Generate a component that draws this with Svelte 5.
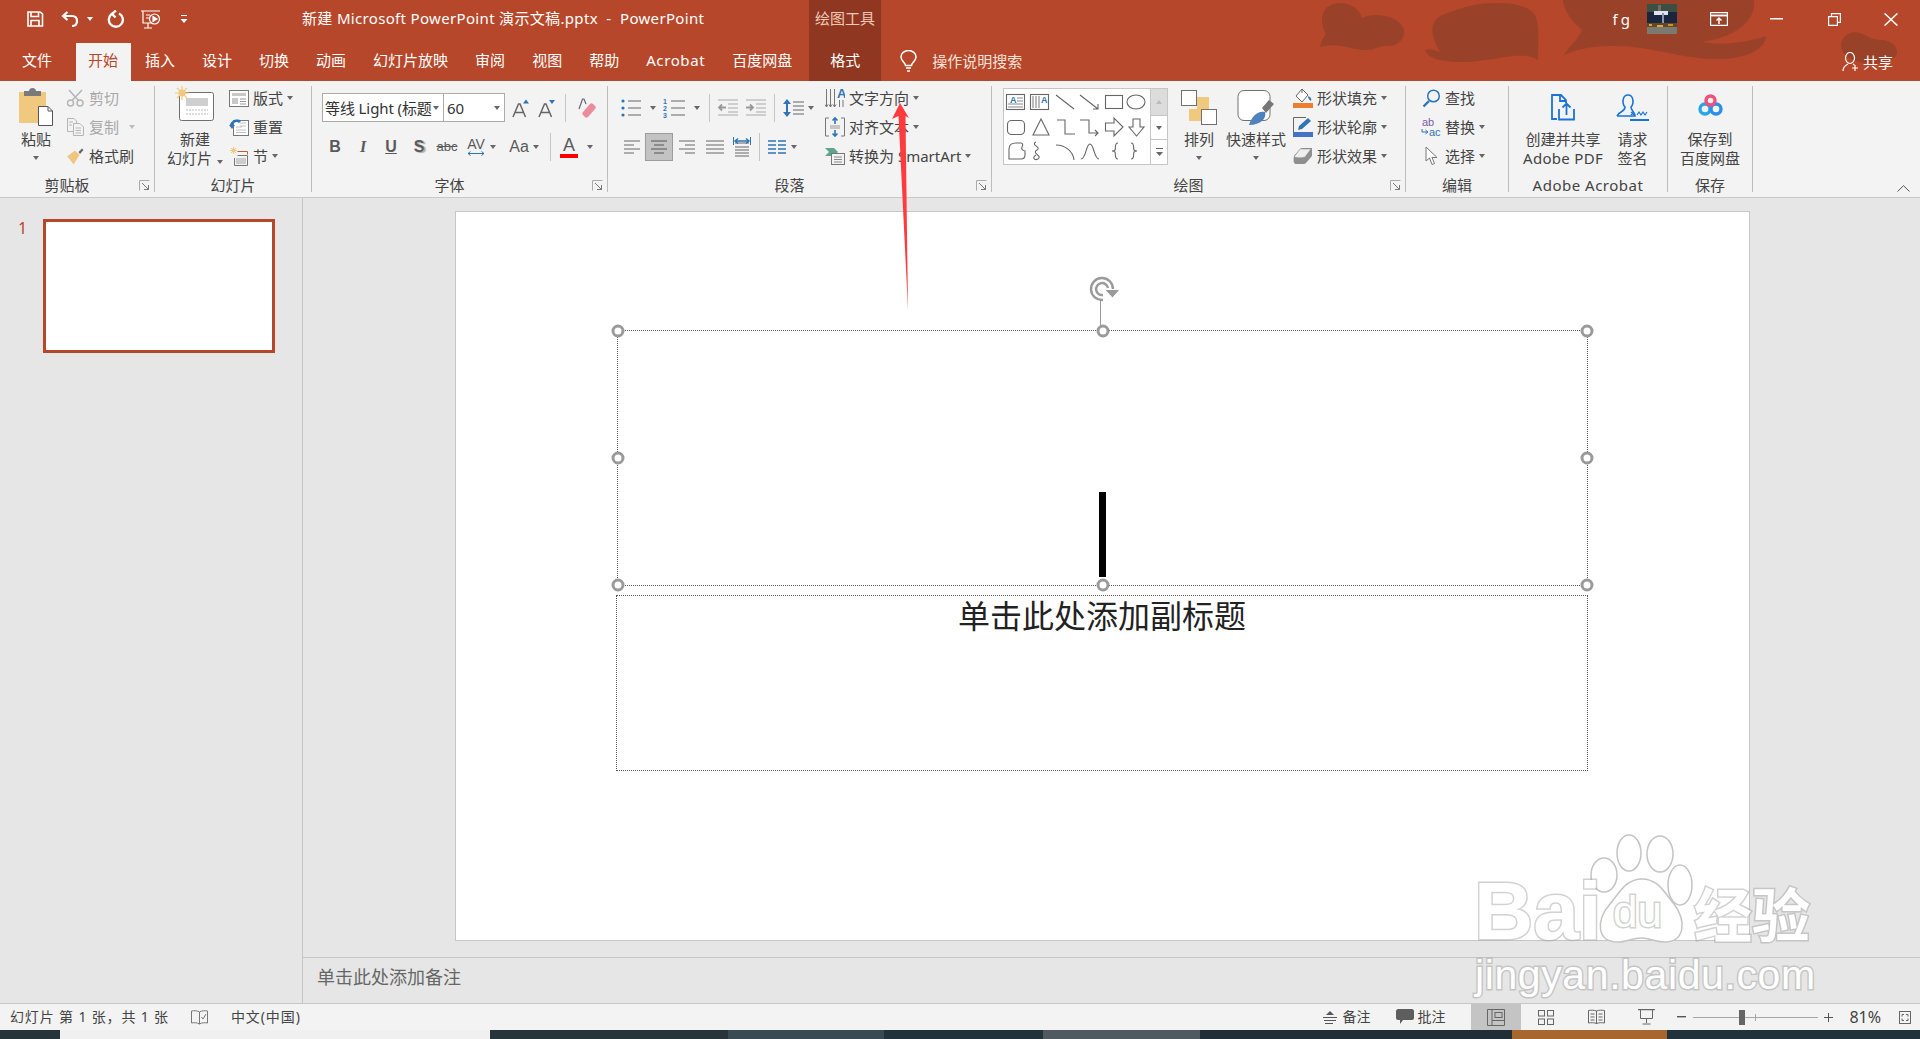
<script>
  const tabs = ['插入', '设计', '切换', '动画', '幻灯片放映', '审阅', '视图', '帮助', 'Acrobat', '百度网盘'];
</script>

<style>
  :global(body) {
    margin: 0;
    background: #e6e6e6;
  }

  .app {
    position: relative;
    width: 1920px;
    height: 1039px;
    overflow: hidden;
    display: flex;
    flex-direction: column;
    font-family: "Noto Sans", "Noto Sans CJK SC", sans-serif;
    font-size: 15px;
    line-height: 20px;
    color: #444;
    background: #e6e6e6;
  }

  svg {
    display: block;
    flex: none;
  }

  /* header */
  .header {
    position: relative;
    height: 81px;
    flex: none;
    background: #b7472a;
    color: #fff;
  }

  .header-art {
    position: absolute;
    left: 0;
    top: 0;
  }

  .titlebar,
  .tabs {
    position: relative;
    display: flex;
  }

  .titlebar {
    height: 43px;
  }

  .titlebar > * {
    height: 38px;
    display: flex;
    align-items: center;
  }

  .qat {
    width: 302px;
    flex: none;
    padding-left: 26px;
    box-sizing: border-box;
  }

  .qat-undo { margin-left: 17px; }
  .qat-caret { margin-left: 8px; }
  .qat-redo { margin-left: 13px; }
  .qat-show { margin-left: 16px; }
  .qat-more { margin-left: 19px; }

  .caret.light {
    border-top-color: #fff;
  }

  .doc-title {
    width: 507px;
    flex: none;
    padding-bottom: 2px;
    box-sizing: border-box;
    white-space: nowrap;
    letter-spacing: 0.33px;
  }

  .titlebar > .ctx-title {
    width: 72px;
    height: 43px;
    flex: none;
    padding-bottom: 7px;
    box-sizing: border-box;
    justify-content: center;
    background: #8f3720;
    color: #f2c9b9;
  }

  .win {
    margin-left: auto;
    padding-right: 22px;
  }

  .user {
    letter-spacing: 3px;
    margin-right: 14px;
  }

  .avatar { margin-right: 33px; }
  .win-min { margin-left: 42px; }
  .win-restore { margin-left: 45px; }
  .win-close { margin-left: 43px; }

  .tabs {
    height: 38px;
    align-items: stretch;
    padding-left: 8.5px;
  }

  .tab {
    display: flex;
    align-items: center;
    padding: 0 13.5px 5px;
    white-space: nowrap;
  }

  .tab.file {
    margin-right: 10px;
  }

  .tab.latin {
    letter-spacing: 0.6px;
  }

  .tab.active {
    padding: 0 12.5px 5px;
    margin-right: 1px;
    background: #f3f3f3;
    color: #b7472a;
  }

  .tab.format {
    margin-left: 3.5px;
    width: 72px;
    padding: 0 0 5px;
    justify-content: center;
    background: #8f3720;
  }

  .tell {
    display: flex;
    align-items: center;
    margin-left: 19px;
    padding-bottom: 2px;
  }

  .tell span {
    margin-left: 15px;
    padding-bottom: 1px;
    color: #f6e3dc;
  }

  .share {
    display: flex;
    align-items: center;
    margin-left: auto;
    padding-right: 27px;
  }

  .share span {
    margin-left: 4px;
  }

  /* ribbon */
  .ribbon {
    display: flex;
    align-items: flex-start;
    height: 117px;
    flex: none;
    padding-top: 5px;
    box-sizing: border-box;
    background: #f3f3f3;
    border-bottom: 1px solid #c9c9c9;
  }

  .group {
    display: flex;
    flex-direction: column;
    height: 106px;
    flex: none;
    box-sizing: border-box;
    border-right: 1px solid #bdbdbd;
  }

  .g-clip { width: 155px; }
  .g-slides { width: 157px; }
  .g-font { width: 296px; }
  .g-para { width: 384px; }
  .g-draw { width: 414px; }
  .g-edit { width: 103px; }
  .g-acro { width: 159px; }
  .g-save { width: 85px; }

  .body {
    display: flex;
    height: 90px;
    flex: none;
  }

  .label {
    display: flex;
    height: 18px;
    flex: none;
    line-height: 18px;
    align-items: center;
  }

  .label span {
    flex: 1;
    text-align: center;
  }

  .label .spaced {
    letter-spacing: 0.5px;
  }

  .launcher {
    width: 20px;
    display: flex;
    justify-content: center;
  }

  .big {
    display: flex;
    flex-direction: column;
    align-items: center;
    flex: none;
    line-height: 19px;
    white-space: nowrap;
  }

  .big-icon {
    height: 44px;
    flex: none;
    display: flex;
    align-items: flex-start;
    justify-content: center;
  }

  .big .caret {
    margin-top: 7px;
  }

  .big-line {
    display: flex;
    align-items: center;
    gap: 5px;
  }

  .big-line.spaced {
    letter-spacing: 0.3px;
  }

  .small {
    display: flex;
    flex-direction: column;
    gap: 5px;
    flex: none;
  }

  .sbtn {
    display: flex;
    align-items: center;
    height: 24px;
    white-space: nowrap;
  }

  .sbtn .ico {
    width: 20px;
    margin-right: 4px;
    display: flex;
    justify-content: center;
    flex: none;
  }

  .sbtn .caret {
    margin-left: 4px;
  }

  .sbtn .cr-copy {
    margin-left: 10px;
  }

  .disabled {
    color: #a8a8a8;
  }

  .caret {
    display: block;
    width: 0;
    height: 0;
    flex: none;
    border-left: 3.5px solid transparent;
    border-right: 3.5px solid transparent;
    border-top: 4px solid #666;
  }

  .caret.off {
    border-top-color: #bdbdbd;
  }

  .paste-col { width: 48px; margin-left: 12px; }
  .clip-small { margin-left: 6px; }
  .clip-small .ico { width: 18px; margin-right: 5px; }

  .slide-col { width: 60px; margin-left: 10px; }
  .slide-small { margin-left: 4px; }

  /* font + paragraph controls */
  .stack {
    display: flex;
    flex-direction: column;
    padding-top: 7px;
    gap: 10px;
  }

  .row {
    display: flex;
    align-items: center;
    height: 29px;
    flex: none;
  }

  .g-font .stack { margin-left: 10px; }

  .combo {
    display: flex;
    align-items: center;
    justify-content: space-between;
    height: 29px;
    box-sizing: border-box;
    background: #fff;
    border: 1px solid #ababab;
    padding: 0 4px 0 2px;
    color: #333;
    white-space: nowrap;
  }

  .combo-font { width: 122px; }
  .combo-size { width: 62px; margin-left: -1px; padding-left: 3px; }

  .combo-name {
    letter-spacing: -0.1px;
  }

  .vsep {
    width: 1px;
    height: 28px;
    flex: none;
    background: #c6c6c6;
  }

  .grow { margin-left: 7px; }
  .shrink { margin-left: 8px; }
  .sep-a { margin-left: 9px; }
  .clear { margin-left: 12px; }

  .glyph {
    display: flex;
    align-items: center;
    justify-content: center;
    width: 18px;
    height: 24px;
    flex: none;
    font-family: "Liberation Sans", sans-serif;
    font-size: 16px;
    color: #5a5a5a;
  }

  .glyph.bold { font-weight: 700; margin-left: 4px; }
  .glyph.ital { font-style: italic; font-family: "Liberation Serif", serif; font-weight: 700; margin-left: 10px; }
  .glyph.und { text-decoration: underline; font-weight: 700; margin-left: 10px; }
  .glyph.shad { font-weight: 700; margin-left: 10px; text-shadow: 2px 1px 1px #aaa; }
  .glyph.strike { width: 20px; font-size: 13px; text-decoration: line-through; margin-left: 9px; }
  .glyph.case { margin-left: 14px; font-size: 16px; }

  .spacing { margin-left: 10px; flex-direction: column; line-height: 12px; font-size: 14px; }
  .spacing svg { margin-top: 1px; }
  .cr { margin-left: 5px; }
  .sep-b { margin-left: 11px; }

  .color {
    flex-direction: column;
    margin-left: 9px;
    font-size: 18px;
    line-height: 18px;
  }

  .color i {
    display: block;
    width: 18px;
    height: 4px;
    background: #f00;
  }

  .cr-color { margin-left: 9px; }

  .para-left {
    margin-left: 13px;
    width: 204px;
    flex: none;
  }

  .b-num { margin-left: 7px; }
  .para-left .cr { margin-left: 8px; }
  .p-sep1 { margin-left: 9px; }
  .p-out { margin-left: 8px; }
  .p-in { margin-left: 8px; }
  .p-sep2 { margin-left: 8px; }
  .p-space { margin-left: 8px; }
  .para-left .p-space-cr { margin-left: 3px; }

  .al-left { margin-left: 3px; }

  .al-center {
    display: flex;
    align-items: center;
    justify-content: center;
    width: 28px;
    height: 28px;
    box-sizing: border-box;
    margin-left: 5px;
    background: #c3c3c3;
    border: 1px solid #9c9c9c;
    flex: none;
  }

  .al-right { margin-left: 6px; }
  .al-just { margin-left: 11px; }
  .al-dist { margin-left: 9px; }
  .p-sep3 { margin-left: 8px; }
  .p-cols { margin-left: 8px; }
  .para-left .p-cols-cr { margin-left: 5px; }

  .para-small {
    margin-left: 0;
  }

  .gallery {
    display: flex;
    width: 165px;
    height: 77px;
    margin: 2px 0 0 11px;
    box-sizing: border-box;
    background: #fff;
    border: 1px solid #c6c6c6;
    flex: none;
  }

  .scroll {
    display: flex;
    flex-direction: column;
    width: 18px;
    margin-left: auto;
    border-left: 1px solid #c6c6c6;
  }

  .scroll div {
    display: flex;
    align-items: center;
    justify-content: center;
    height: 23px;
    border-bottom: 1px solid #c6c6c6;
  }

  .scroll .up {
    height: 26px;
    background: #dcdcdc;
  }

  .scroll .down {
    flex: 1;
    border-bottom: 0;
  }

  .up-caret {
    width: 0;
    height: 0;
    border-left: 3.5px solid transparent;
    border-right: 3.5px solid transparent;
    border-bottom: 4px solid #bbb;
  }

  .arrange { width: 46px; margin-left: 8px; }
  .arrange .big-icon, .quick .big-icon { padding-top: 4px; height: 40px; }
  .quick { width: 60px; margin-left: 4px; }
  .draw-small { margin-left: 7px; }

  .edit-small { margin-left: 15px; }

  .acro1 { width: 94px; margin-left: 7px; }
  .acro2 { width: 45px; }
  .acro1 .big-icon, .acro2 .big-icon, .save .big-icon { padding-top: 8px; height: 36px; }
  .save { width: 84px; }

  .collapse {
    margin-left: auto;
    margin-right: 10px;
    align-self: flex-end;
    margin-bottom: 5px;
  }

  /* workspace */
  .workspace {
    display: flex;
    flex: 1;
    min-height: 0;
  }

  .thumbs {
    display: flex;
    width: 303px;
    flex: none;
    box-sizing: border-box;
    padding: 21px 0 0 18px;
    border-right: 1px solid #c6c6c6;
  }

  .num {
    width: 25px;
    margin-top: -1px;
    font-size: 16px;
    color: #b7472a;
    flex: none;
  }

  .thumb {
    width: 232px;
    height: 134px;
    box-sizing: border-box;
    background: #fff;
    border: 3px solid #b7472a;
  }

  .editor {
    display: flex;
    flex-direction: column;
    flex: 1;
    min-width: 0;
  }

  .stage {
    height: 760px;
    flex: none;
    box-sizing: border-box;
    padding: 13px 0 0 152px;
    border-bottom: 1px solid #c6c6c6;
  }

  .slide {
    position: relative;
    width: 1295px;
    height: 730px;
    box-sizing: border-box;
    background: #fff;
    border: 1px solid #c6c6c6;
  }

  .title-box,
  .sub-box {
    position: absolute;
    box-sizing: border-box;
    border: 1px dotted #555;
  }

  .title-box {
    left: 161px;
    top: 118px;
    width: 971px;
    height: 256px;
  }

  .sub-box {
    left: 160px;
    top: 383px;
    width: 972px;
    height: 176px;
    text-align: center;
    font-size: 32px;
    line-height: 40px;
    color: #222;
  }

  .handle {
    position: absolute;
    width: 13px;
    height: 13px;
    box-sizing: border-box;
    background: #fff;
    border: 3px solid #9a9a9a;
    border-radius: 50%;
    transform: translate(-50%, -50%);
  }

  .hl { left: 0; }
  .hc { left: 50%; }
  .hr { left: 100%; }
  .ht { top: 0; }
  .hm { top: 50%; }
  .hb { top: 100%; }

  .rotate {
    position: absolute;
    left: 632px;
    top: 62px;
  }

  .cursor {
    position: absolute;
    left: 481px;
    top: 161px;
    width: 7px;
    height: 85px;
    background: #000;
  }

  .notes {
    flex: 1;
    padding: 7px 0 0 14px;
    font-size: 18px;
    line-height: 24px;
    color: #666;
  }

  /* status bar */
  .status {
    display: flex;
    align-items: center;
    height: 27px;
    flex: none;
    box-sizing: border-box;
    padding: 0 9px 0 10px;
    background: #f3f3f3;
    border-top: 1px solid #c6c6c6;
    font-size: 14px;
    color: #444;
    white-space: nowrap;
  }

  .st-count {
    letter-spacing: 0.85px;
    padding-bottom: 1px;
  }

  .st-check { margin-left: 22px; }

  .st-lang {
    margin-left: 23px;
    letter-spacing: 0.9px;
    padding-bottom: 1px;
  }

  .st-right {
    display: flex;
    align-items: center;
    align-self: stretch;
    margin-left: auto;
  }

  .st-item {
    display: flex;
    align-items: center;
    gap: 5px;
  }

  .st-item span {
    padding-bottom: 1px;
  }

  .st-comment { margin-left: 26px; gap: 3px; }

  .views {
    display: flex;
    align-self: stretch;
    margin-left: 26px;
  }

  .view {
    display: flex;
    align-items: center;
    justify-content: center;
    width: 50px;
  }

  .view.on {
    background: #c4c4c4;
  }

  .zoom {
    display: flex;
    align-items: center;
    margin-left: 6px;
  }

  .slider {
    position: relative;
    width: 125px;
    height: 1px;
    margin: 0 6px 0 7px;
    background: #a6a6a6;
  }

  .slider i {
    position: absolute;
    left: 46px;
    top: -7px;
    width: 6px;
    height: 15px;
    background: #666;
  }

  .slider b {
    position: absolute;
    left: 62px;
    top: -3px;
    width: 1px;
    height: 7px;
    background: #a6a6a6;
  }

  .pct {
    margin-left: 16px;
    font-size: 16px;
    padding-bottom: 1px;
  }

  .fit { margin-left: 18px; }

  /* taskbar strip */
  .taskbar {
    display: flex;
    height: 9px;
    flex: none;
    background: #22323a;
  }

  .taskbar div { flex: none; }
  .t1 { width: 60px; background: #263339; }
  .t2 { width: 430px; background: #f0f0f0; }
  .t3 { width: 238px; background: #27353b; }
  .t4 { width: 156px; background: #3a4a52; }
  .t5 { width: 159px; background: #22323a; }
  .t6 { width: 157px; background: #4f5a60; }
  .t7 { width: 312px; background: #1f2e37; }
  .t8 { width: 155px; background: #a8662f; }

  /* things lying over the window */
  .arrow {
    position: absolute;
    left: 0;
    top: 0;
    pointer-events: none;
  }

  .wm {
    position: absolute;
    left: 0;
    top: 0;
    width: 1920px;
    height: 1039px;
    pointer-events: none;
    color: #fff;
    font-family: "Liberation Sans", sans-serif;
    -webkit-text-stroke: 3px rgba(165, 165, 165, 0.5);
  }

  .wm span {
    position: absolute;
    white-space: nowrap;
    paint-order: stroke fill;
  }

  .wm-bai {
    left: 1474px;
    top: 866px;
    font-size: 82px;
    line-height: 90px;
    font-weight: 700;
  }

  .wm-du {
    left: 1613px;
    top: 887px;
    font-size: 44px;
    line-height: 50px;
  }

  .wm-jy {
    left: 1694px;
    top: 870px;
    font-family: "Noto Sans CJK SC", sans-serif;
    font-size: 58px;
    line-height: 84px;
    font-weight: 700;
  }

  .wm-url {
    left: 1475px;
    top: 950px;
    font-size: 41px;
    line-height: 50px;
    letter-spacing: 0.6px;
  }

  .wm-paw {
    position: absolute;
    left: 1590px;
    top: 830px;
  }
</style>

<div class="app">
  <header class="header">
    <svg class="header-art" width="1920" height="81" viewBox="0 0 1920 81">
      <g fill="#9a412a">
        <path d="M1320 47Q1322 38 1326 34C1318 20 1322 3 1340 3C1352 3 1360 10 1362 18C1372 12 1400 15 1404 30C1405 40 1398 44 1392 46C1375 45 1380 50 1365 50C1350 50 1340 42 1320 47Z" />
        <path d="M1425 50C1430 48 1435 50 1440 52C1430 35 1428 20 1445 14C1455 10 1470 5 1480 4C1500 2 1525 2 1535 15C1540 25 1538 45 1538 60C1530 55 1520 55 1505 57C1485 60 1465 65 1440 60C1432 58 1426 55 1425 50Z" />
        <path d="M1564 55C1570 45 1578 40 1582 30C1570 20 1563 8 1563 0L1754 0C1756 15 1745 35 1703 42C1720 46 1750 42 1766 36C1765 52 1740 60 1715 59C1680 59 1650 45 1610 46C1590 46 1575 50 1564 55Z" />
        <path d="M1842 50C1838 38 1850 30 1860 33C1868 36 1872 40 1880 40C1892 40 1900 48 1896 56C1890 64 1870 66 1860 62C1852 60 1844 56 1842 50Z" />
      </g>
    </svg>

    <div class="titlebar">
      <div class="qat">
        <svg width="18" height="16" viewBox="0 0 18 16" fill="none" stroke="#fff" stroke-width="1.6"><path d="M2 1H14L16.500 3V15H2Z" /><path d="M5 1V5.500H12.500V1" /><path d="M5 15V9.500H13V15" /></svg>
        <svg class="qat-undo" width="18" height="16" viewBox="0 0 18 16" fill="none" stroke="#fff" stroke-width="2.200"><path d="M2 5H11C14 5 16 7 16 10C16 13 14 15 11 15" /><path d="M6.500 1L2 5L6.500 9" /></svg>
        <span class="caret light qat-caret"></span>
        <svg class="qat-redo" width="18" height="18" viewBox="0 0 18 18" fill="none" stroke="#fff" stroke-width="2.300"><path d="M6.500 3.600A7 7 0 1 0 13 3.500" /><path d="M10 .5L6 3.800L9.500 7.500" /></svg>
        <svg class="qat-show" width="21" height="19" viewBox="0 0 21 19" fill="none" stroke="#fff" stroke-width="1.200"><path d="M1 1H20M3 1V13H12M8 13V18M4 18H12" /><circle cx="14.500" cy="9" r="5" /><path d="M13 6.500L17 9L13 11.500Z" fill="#fff" /><path d="M6 5H10M6 8H9" /></svg>
        <svg class="qat-more" width="8" height="9" viewBox="0 0 8 9" fill="#fff"><rect x="1" width="6" height="1" /><path d="M0.500 4H7.500L4 8Z" /></svg>
      </div>
      <div class="doc-title">新建 Microsoft PowerPoint 演示文稿.pptx&nbsp; -&nbsp; PowerPoint</div>
      <div class="ctx-title">绘图工具</div>
      <div class="win">
        <span class="user">fg</span>
        <svg class="avatar" width="30" height="30" viewBox="0 0 30 30">
          <rect width="30" height="30" fill="#7a7a70" />
          <rect width="30" height="9" fill="#3b4f44" />
          <rect x="11" y="1" width="3" height="8" fill="#776a5c" />
          <rect x="0" y="8" width="30" height="11" fill="#1c2540" />
          <rect x="7" y="7" width="14" height="4" fill="#dfe5ee" />
          <rect x="0" y="19" width="30" height="4" fill="#5f4a26" />
          <rect x="2" y="20" width="3" height="2" fill="#e69a3a" />
          <rect x="10" y="21" width="6" height="2" fill="#e8a040" />
          <rect x="21" y="20" width="5" height="2" fill="#d98a30" />
          <rect x="15" y="9" width="2" height="10" fill="#8795b0" />
        </svg>
        <svg width="18" height="14" viewBox="0 0 18 14" fill="none" stroke="#fff" stroke-width="1.200"><path d="M.6.600H17.400V13.400H.6Z" /><path d="M.6 3.500H17.400" stroke-width="1.800" /><path d="M9 12V6M6.500 8.500L9 6L11.500 8.500" stroke-width="1.500" /></svg>
        <svg class="win-min" width="13" height="2" viewBox="0 0 13 2"><rect width="13" height="1.500" fill="#fff" /></svg>
        <svg class="win-restore" width="13" height="13" viewBox="0 0 13 13" fill="none" stroke="#fff" stroke-width="1.200"><path d="M.6 3.600H9.400V12.400H.6Z" /><path d="M3.500 3.500V.6H12.400V9.400H9.500" /></svg>
        <svg class="win-close" width="14" height="13" viewBox="0 0 14 13" stroke="#fff" stroke-width="1.400"><path d="M.6.400L13.400 12.600M13.400.4L.6 12.600" /></svg>
      </div>
    </div>

    <nav class="tabs">
      <div class="tab file">文件</div>
      <div class="tab active">开始</div>
      {#each tabs as tab}
        <div class="tab" class:latin={tab === 'Acrobat'}>{tab}</div>
      {/each}
      <div class="tab format">格式</div>
      <div class="tell">
        <svg width="17" height="22" viewBox="0 0 17 22" fill="none" stroke="#fff" stroke-width="1.500"><path d="M5.500 15.500C5.500 12.500 1 11 1 7A7.500 6.500 0 0 1 16 7C16 11 11.500 12.500 11.500 15.500Z" /><path d="M6 18H11M7 21H10" /></svg>
        <span>操作说明搜索</span>
      </div>
      <div class="share">
        <svg width="17" height="20" viewBox="0 0 17 20" fill="none" stroke="#fff" stroke-width="1.200"><ellipse cx="8" cy="6" rx="4.500" ry="5.500" /><path d="M1 19C1 15 3 13.500 6 12M11 12L12.500 13" /><path d="M13 13V19M10 16H16" /></svg>
        <span>共享</span>
      </div>
    </nav>
  </header>

  <section class="ribbon">
    <div class="group g-clip">
      <div class="body">
        <div class="big paste-col">
          <div class="big-icon">
            <svg width="36" height="40" viewBox="0 0 36 40">
              <rect x="1" y="6" width="27" height="31" fill="#f0c97f" />
              <path d="M6 10V5H11C11 1 18 1 18 5H23V10Z" fill="#7a7a7a" />
              <path d="M20.500 20.500H30L34.500 25V39.500H20.500Z" fill="#fff" stroke="#555" />
              <path d="M30 20.500V25H34.500" fill="none" stroke="#555" />
            </svg>
          </div>
          <div class="big-line">粘贴</div>
          <span class="caret"></span>
        </div>
        <div class="small clip-small">
          <div class="sbtn disabled">
            <span class="ico"><svg width="17" height="18" viewBox="0 0 17 18" fill="none" stroke="#b5b5b5" stroke-width="1.500"><circle cx="3.500" cy="14" r="3" /><circle cx="13" cy="14" r="3" /><path d="M2 1L11.500 11.500M15 1L5 11.500" /></svg></span>剪切
          </div>
          <div class="sbtn disabled">
            <span class="ico"><svg width="17" height="18" viewBox="0 0 17 18" fill="none" stroke="#b5b5b5"><path d="M.5.500H7L9.500 3V13.500H.5Z" /><path d="M6.500 5.500H13L16.500 9V17.500H6.500Z" fill="#f3f3f3" /><path d="M2 4H6M2 7H5M8.500 10H14M8.500 12.500H14M8.500 15H14" /></svg></span>复制
            <span class="caret off cr-copy"></span>
          </div>
          <div class="sbtn">
            <span class="ico"><svg width="18" height="19" viewBox="0 0 18 19"><path d="M12.500 5L16 1.500L17.500 3L14 7Z" fill="#666" /><path d="M1 9.500L9 3.500L13.500 8L7.500 17.500C5 14 4 12 1 9.500Z" fill="#eec67f" /></svg></span>格式刷
          </div>
        </div>
      </div>
      <div class="label"><span>剪贴板</span><div class="launcher"><svg width="11" height="11" viewBox="0 0 11 11" fill="none" stroke="#777"><path d="M.5 10.500V.5H10.500" stroke="#aaa" /><path d="M3 3L9.500 9.500M5 9.500H9.500V5" /></svg></div></div>
    </div>

    <div class="group g-slides">
      <div class="body">
        <div class="big slide-col">
          <div class="big-icon">
            <svg width="40" height="38" viewBox="0 0 40 38" fill="none">
              <rect x="4.500" y="6.500" width="34" height="28" rx="2" fill="#fff" stroke="#707070" />
              <rect x="11" y="12" width="22" height="8" fill="#cfcfcf" />
              <path d="M11 24H33M11 28H33" stroke="#bbb" stroke-dasharray="2 1" />
              <circle cx="7" cy="7" r="3.500" fill="#f0c97f" />
              <path d="M7 0V14M0 7H14M2 2L12 12M12 2L2 12" stroke="#f0c97f" stroke-width="1.200" />
            </svg>
          </div>
          <div class="big-line">新建</div>
          <div class="big-line">幻灯片<span class="caret"></span></div>
        </div>
        <div class="small slide-small">
          <div class="sbtn">
            <span class="ico"><svg width="20" height="17" viewBox="0 0 20 17" fill="none" stroke="#777"><rect x=".5" y=".5" width="19" height="16" fill="#fff" /><rect x="3" y="3" width="14" height="3" fill="#c8c8c8" stroke="none" /><rect x="3" y="8" width="6" height="6" fill="#c8c8c8" stroke="none" /><path d="M11 9H17M11 11.500H17M11 14H17" stroke="#999" /></svg></span>版式<span class="caret"></span>
          </div>
          <div class="sbtn">
            <span class="ico"><svg width="20" height="18" viewBox="0 0 20 18" fill="none"><rect x="4.500" y="2.500" width="15" height="15" fill="#fff" stroke="#777" /><path d="M11 5H17M7 9H13M11 8H17M7 12H17M7 14.500H17" stroke="#c0c0c0" /><path d="M1 7C2 2 9 0 12 3L10 5C8 3 5 4 4 7L6 7L3 11L0 7Z" fill="#2e75b6" /></svg></span>重置
          </div>
          <div class="sbtn">
            <span class="ico"><svg width="19" height="19" viewBox="0 0 19 19" fill="none"><path d="M7.500 4.500H17.500V7.500" stroke="#c55a2b" /><path d="M7.500 8.500H17.500V18.500H4.500V11" stroke="#777" /><rect x="6" y="11" width="10" height="6" fill="#ccc" /><circle cx="3.500" cy="3.500" r="2" fill="#f0c97f" /><path d="M3.500 0V7M0 3.500H7M1 1L6 6M6 1L1 6" stroke="#f0c97f" /></svg></span>节<span class="caret"></span>
          </div>
        </div>
      </div>
      <div class="label"><span>幻灯片</span></div>
    </div>

    <div class="group g-font">
      <div class="body">
        <div class="stack">
          <div class="row">
            <div class="combo combo-font"><span class="combo-name">等线 Light (标题</span><span class="caret"></span></div>
            <div class="combo combo-size"><span>60</span><span class="caret"></span></div>
            <svg class="grow" width="18" height="20" viewBox="0 0 18 20"><path d="M1 19L6.500 6H8L13.500 19M3.500 14.500H11" fill="none" stroke="#666" stroke-width="1.500" /><path d="M11 5.500L14 1.500L17 5.500Z" fill="#2e75b6" /></svg>
            <svg class="shrink" width="18" height="20" viewBox="0 0 18 20"><path d="M1 19L6.500 6H8L13.500 19M3.500 14.500H11" fill="none" stroke="#666" stroke-width="1.500" /><path d="M11 2H17L14 6Z" fill="#2e75b6" /></svg>
            <span class="vsep sep-a"></span>
            <svg class="clear" width="18" height="22" viewBox="0 0 18 22"><path d="M1 12L4.500 2H6L8 7" fill="none" stroke="#666" stroke-width="1.200" /><path d="M5 15L12 7C13 6 14 6 15 7L17 9C18 10 18 11 17 12L10 20C9 21 8 21 7 20L5 18C4 17 4 16 5 15Z" fill="#ec8b99" /></svg>
          </div>
          <div class="row">
            <span class="glyph bold">B</span>
            <span class="glyph ital">I</span>
            <span class="glyph und">U</span>
            <span class="glyph shad">S</span>
            <span class="glyph strike">abc</span>
            <span class="glyph spacing">AV<svg width="18" height="5" viewBox="0 0 18 5" fill="none" stroke="#2e75b6"><path d="M1 2.500H17M3.500.500L1 2.500L3.500 4.500M14.500.500L17 2.500L14.500 4.500" /></svg></span>
            <span class="caret cr"></span>
            <span class="glyph case">Aa</span>
            <span class="caret cr"></span>
            <span class="vsep sep-b"></span>
            <span class="glyph color">A<i></i></span>
            <span class="caret cr-color"></span>
          </div>
        </div>
      </div>
      <div class="label"><span>字体</span><div class="launcher"><svg width="11" height="11" viewBox="0 0 11 11" fill="none" stroke="#777"><path d="M.5 10.500V.5H10.500" stroke="#aaa" /><path d="M3 3L9.500 9.500M5 9.500H9.500V5" /></svg></div></div>
    </div>

    <div class="group g-para">
      <div class="body">
        <div class="stack para-left">
          <div class="row">
            <svg width="21" height="20" viewBox="0 0 21 20"><g fill="#2e75b6"><circle cx="2" cy="3" r="1.600" /><circle cx="2" cy="10" r="1.600" /><circle cx="2" cy="17" r="1.600" /></g><path d="M7 3H20M7 10H20M7 17H20" stroke="#666" stroke-width="1.200" /></svg>
            <span class="caret cr"></span>
            <svg class="b-num" width="23" height="20" viewBox="0 0 23 20"><g fill="#2e75b6" font-family="Liberation Sans" font-size="7" font-weight="700"><text x="0" y="6">1</text><text x="0" y="13">2</text><text x="0" y="20">3</text></g><path d="M8 3H22M8 10H22M8 17H22" stroke="#666" stroke-width="1.200" /></svg>
            <span class="caret cr"></span>
            <span class="vsep p-sep1"></span>
            <svg class="p-out" width="20" height="17" viewBox="0 0 20 17" stroke="#aaa" fill="none" stroke-width="1.200"><path d="M0 1H20M10 5H20M10 9H20M10 13H20M0 16H20" /><path d="M8 8.500H1M4 5.500L1 8.500L4 11.500" stroke="#999" stroke-width="1.800" /></svg>
            <svg class="p-in" width="20" height="17" viewBox="0 0 20 17" stroke="#aaa" fill="none" stroke-width="1.200"><path d="M0 1H20M10 5H20M10 9H20M10 13H20M0 16H20" /><path d="M0 8.500H7M4 5.500L7 8.500L4 11.500" stroke="#999" stroke-width="1.800" /></svg>
            <span class="vsep p-sep2"></span>
            <svg class="p-space" width="22" height="22" viewBox="0 0 22 22"><path d="M4 2L8 7H5V15H8L4 20L0 15H3V7H0Z" fill="#2e75b6" /><path d="M10 5H21M10 9H21M10 13H21M10 17H21" stroke="#666" stroke-width="1.200" /></svg>
            <span class="caret p-space-cr"></span>
          </div>
          <div class="row">
            <svg class="al-left" width="16" height="14" viewBox="0 0 16 14" stroke="#666"><path d="M0 1H16M0 5H10M0 9H16M0 13H10" /></svg>
            <div class="al-center"><svg width="16" height="14" viewBox="0 0 16 14" stroke="#555"><path d="M0 1H16M3 5H13M0 9H16M3 13H13" /></svg></div>
            <svg class="al-right" width="16" height="14" viewBox="0 0 16 14" stroke="#666"><path d="M0 1H16M6 5H16M0 9H16M6 13H16" /></svg>
            <svg class="al-just" width="18" height="14" viewBox="0 0 18 14" stroke="#666"><path d="M0 1H18M0 5H18M0 9H18M0 13H18" /></svg>
            <svg class="al-dist" width="18" height="20" viewBox="0 0 18 20"><path d="M2 6H16M2 10H16M2 13H16M2 16H16M2 19H16" stroke="#666" /><path d="M.5 0V8M17.500 0V8" stroke="#2e75b6" /><path d="M2 4H16M5 1.500L2 4L5 6.500M13 1.500L16 4L13 6.500" stroke="#2e75b6" stroke-width="1.400" fill="none" /></svg>
            <span class="vsep p-sep3"></span>
            <svg class="p-cols" width="18" height="14" viewBox="0 0 18 14" stroke="#2e75b6" stroke-width="1.300"><path d="M0 1H8M10 1H18M0 5H8M10 5H18M0 9H8M10 9H18M0 13H8M10 13H18" /></svg>
            <span class="caret p-cols-cr"></span>
          </div>
        </div>
        <div class="small para-small">
          <div class="sbtn">
            <span class="ico"><svg width="20" height="22" viewBox="0 0 20 22" fill="none" stroke="#777"><path d="M1.500 2V20M5.500 2V20M9.500 2V20M1.500 20L0 17.500M1.500 20L3 17.500M5.500 20L4 17.500M5.500 20L7 17.500M9.500 20L8 17.500M9.500 20L11 17.500" /><text x="12" y="11" fill="#2e75b6" stroke="none" font-family="Liberation Sans" font-size="13" font-weight="700">A</text><path d="M14.500 13V20M18 13V20" /></svg></span>文字方向<span class="caret"></span>
          </div>
          <div class="sbtn">
            <span class="ico"><svg width="20" height="22" viewBox="0 0 20 22" fill="none" stroke="#777"><path d="M4 2H.5V20H4M16 2H19.500V20H16" /><path d="M5 10H15M5 12H15" stroke="#999" /><path d="M10 2V8M7.500 4.500L10 2L12.500 4.500M10 20V14M7.500 17.500L10 20L12.500 17.500" stroke="#2e75b6" stroke-width="1.600" /></svg></span>对齐文本<span class="caret"></span>
          </div>
          <div class="sbtn">
            <span class="ico"><svg width="20" height="18" viewBox="0 0 20 18" fill="none"><path d="M0 1H9L13 5L9 9H0L4 5Z" fill="#5fa48c" /><rect x="6.500" y="6.500" width="13" height="11" fill="#f3f3f3" stroke="#777" /><path d="M9 10H17M9 12.500H17M9 15H17" stroke="#888" /></svg></span>转换为 SmartArt<span class="caret"></span>
          </div>
        </div>
      </div>
      <div class="label"><span>段落</span><div class="launcher"><svg width="11" height="11" viewBox="0 0 11 11" fill="none" stroke="#777"><path d="M.5 10.500V.5H10.500" stroke="#aaa" /><path d="M3 3L9.500 9.500M5 9.500H9.500V5" /></svg></div></div>
    </div>

    <div class="group g-draw">
      <div class="body">
        <div class="gallery">
          <svg width="146" height="75" viewBox="1 0 146 75" fill="none" stroke="#666" stroke-width="1.100">
            <rect x="3.500" y="5.500" width="18" height="15" />
            <text x="7" y="14" fill="#2e75b6" stroke="none" font-family="Liberation Sans" font-size="9" font-weight="700">A</text>
            <path d="M14 9H20M14 12H20M5 15H20M5 18H20" stroke="#888" />
            <rect x="27.500" y="5.500" width="18" height="15" />
            <path d="M30 7V19M33 7V19M36 7V19" stroke="#888" />
            <text x="38" y="14" fill="#2e75b6" stroke="none" font-family="Liberation Sans" font-size="9" font-weight="700">A</text>
            <path d="M53 6L71 20" />
            <path d="M77 6L95 20M95 15V20H90" />
            <rect x="102.500" y="6.500" width="17" height="13" />
            <ellipse cx="133" cy="13" rx="9" ry="7" />
            <rect x="4.500" y="31.500" width="17" height="14" rx="4" />
            <path d="M38 30L30 46H46Z" />
            <path d="M54 31H62V45H72" />
            <path d="M77 31H86V44H95M92 41L95 44L92 47" />
            <path d="M102.500 34H111V29L120 38L111 47V42H102.500Z" />
            <path d="M130 30H137V38H141L133.500 47L126 38H130Z" />
            <path d="M6 60C6 56 9 54 13 54H18C20 54 20 56 19 58C18 60 20 62 22 62V66C22 69 20 70 18 70H6Z" />
            <path d="M33 53C27 56 39 58 34 61C28 64 40 67 35 70C31 72 29 68 33 66" />
            <path d="M53 56C62 56 70 62 71 71" />
            <path d="M78 70C83 70 83 55 87 55C91 55 91 70 96 70" />
            <path d="M115 54C111 54 113 60 112 61C111 62 110 62 109 62C110 62 111 62 112 63C113 64 111 70 115 70" />
            <path d="M128 54C132 54 130 60 131 61C132 62 133 62 134 62C133 62 132 62 131 63C130 64 132 70 128 70" />
          </svg>
          <div class="scroll">
            <div class="up"><span class="up-caret"></span></div>
            <div><span class="caret"></span></div>
            <div class="down"><svg width="7" height="9" viewBox="0 0 7 9" fill="#666"><rect width="7" height="1" /><path d="M0 4H7L3.500 8Z" /></svg></div>
          </div>
        </div>
        <div class="big arrange">
          <div class="big-icon">
            <svg width="36" height="36" viewBox="0 0 36 36"><rect x="16" y="7" width="12" height="12" fill="#f0c97f" /><rect x="8" y="19" width="12" height="12" fill="#f0c97f" /><rect x=".5" y=".5" width="15" height="15" fill="#fff" stroke="#707070" /><rect x="20.500" y="19.500" width="15" height="15" fill="#fff" stroke="#707070" /></svg>
          </div>
          <div class="big-line">排列</div>
          <span class="caret"></span>
        </div>
        <div class="big quick">
          <div class="big-icon">
            <svg width="38" height="36" viewBox="0 0 38 36"><rect x="1" y=".5" width="32" height="30" rx="6" fill="#fff" stroke="#707070" /><path d="M25 18L32 10L37 14L29 23Z" fill="#777" /><path d="M12 35C14 28 20 20 28 22C30 28 24 35 12 35Z" fill="#4f81bd" /></svg>
          </div>
          <div class="big-line">快速样式</div>
          <span class="caret"></span>
        </div>
        <div class="small draw-small">
          <div class="sbtn">
            <span class="ico"><svg width="20" height="20" viewBox="0 0 20 20"><rect y="15" width="20" height="5" fill="#ed7d31" /><path d="M9 1L3 8L9 14L15 7Z" fill="#fff" stroke="#666" /><path d="M9 1V5" stroke="#666" /><path d="M15 8C17 9 19 10 18 13C16 12 15 10 15 8Z" fill="#2e75b6" /></svg></span>形状填充<span class="caret"></span>
          </div>
          <div class="sbtn">
            <span class="ico"><svg width="20" height="20" viewBox="0 0 20 20" fill="none"><path d="M.5 15V.5H13M.5 14" stroke="#666" /><rect y="15" width="20" height="5" fill="#4472c4" /><path d="M5 13L6 9L15 1L18 4L9 12Z" fill="#2e75b6" /></svg></span>形状轮廓<span class="caret"></span>
          </div>
          <div class="sbtn">
            <span class="ico"><svg width="20" height="18" viewBox="0 0 20 18"><path d="M1 9L7 2C8 1 9 1 10 1H19V9L13 16C12 17 11 17 9 17H3C1 17 0 15 1 9Z" fill="#8f8f8f" /><path d="M1 10L7 2H18L12 10C10 11 4 11 1 10Z" fill="#eeeeee" stroke="#888" stroke-width=".5" /></svg></span>形状效果<span class="caret"></span>
          </div>
        </div>
      </div>
      <div class="label"><span>绘图</span><div class="launcher"><svg width="11" height="11" viewBox="0 0 11 11" fill="none" stroke="#777"><path d="M.5 10.500V.5H10.500" stroke="#aaa" /><path d="M3 3L9.500 9.500M5 9.500H9.500V5" /></svg></div></div>
    </div>

    <div class="group g-edit">
      <div class="body">
        <div class="small edit-small">
          <div class="sbtn">
            <span class="ico"><svg width="19" height="19" viewBox="0 0 19 19" fill="none" stroke="#2e75b6"><circle cx="11.500" cy="7" r="5.800" stroke-width="1.500" /><path d="M7 12L1.500 17.500" stroke-width="2.400" /></svg></span>查找
          </div>
          <div class="sbtn">
            <span class="ico"><svg width="20" height="20" viewBox="0 0 20 20"><text x="1" y="9" fill="#7d5aa8" font-family="Liberation Sans" font-size="11">ab</text><text x="8" y="19" fill="#2e75b6" font-family="Liberation Sans" font-size="11">ac</text><path d="M1 12V15H7M4.500 13L7 15L4.500 17" fill="none" stroke="#2e75b6" /></svg></span>替换<span class="caret cr-rep"></span>
          </div>
          <div class="sbtn">
            <span class="ico"><svg width="13" height="20" viewBox="0 0 13 20"><path d="M1 1V15L4.500 12L7 18.500L9.500 17.500L7 11.500H12Z" fill="#fff" stroke="#777" /></svg></span>选择<span class="caret"></span>
          </div>
        </div>
      </div>
      <div class="label"><span>编辑</span></div>
    </div>

    <div class="group g-acro">
      <div class="body">
        <div class="big acro1">
          <div class="big-icon">
            <svg width="24" height="27" viewBox="0 0 24 27" fill="none" stroke="#1a73d9" stroke-width="1.800"><path d="M6 25H1V1H10L15 6V9" /><path d="M9 1V7H15" /><path d="M8 15V25.500H23V15M15.500 21V10M11.500 13.500L15.500 9.500L19.500 13.500" /></svg>
          </div>
          <div class="big-line">创建并共享</div>
          <div class="big-line spaced">Adobe PDF</div>
        </div>
        <div class="big acro2">
          <div class="big-icon">
            <svg width="33" height="28" viewBox="0 0 33 28" fill="none" stroke="#1a73d9" stroke-width="1.600"><path d="M1 22C3 17 9 18 9 13C6 10 6 1 12 1C18 1 18 10 15 13C15 17 19 18 19 22H1" /><path d="M15 18L18 21M18 18L15 21M21 21L23 18L25 21L27 18L29 21L31 18" stroke-width="1.200" /><path d="M14 26H33" stroke-width="2" /></svg>
          </div>
          <div class="big-line">请求</div>
          <div class="big-line">签名</div>
        </div>
      </div>
      <div class="label"><span class="spaced">Adobe Acrobat</span></div>
    </div>

    <div class="group g-save">
      <div class="body">
        <div class="big save">
          <div class="big-icon">
            <svg width="25" height="22" viewBox="0 0 25 22" fill="none" stroke-width="3.400"><circle cx="7" cy="15" r="5" stroke="#2aa5e8" /><circle cx="18" cy="15" r="5" stroke="#2a8fe8" /><circle cx="12.500" cy="6.500" r="4.500" stroke="#f0507a" /></svg>
          </div>
          <div class="big-line">保存到</div>
          <div class="big-line">百度网盘</div>
        </div>
      </div>
      <div class="label"><span>保存</span></div>
    </div>

    <svg class="collapse" width="13" height="7" viewBox="0 0 13 7" fill="none" stroke="#555"><path d="M.5 6.500L6.500 .7L12.500 6.500" /></svg>
  </section>

  <main class="workspace">
    <aside class="thumbs">
      <div class="num">1</div>
      <div class="thumb"></div>
    </aside>
    <div class="editor">
      <div class="stage">
        <div class="slide">
          <svg class="rotate" width="34" height="56" viewBox="0 0 34 56" fill="none" stroke="#9a9a9a"><path d="M25 15A11 11 0 1 0 15 26" stroke-width="2.400" /><path d="M20 14A6 6 0 1 0 15 21" stroke-width="2.400" /><path d="M16.500 15.500H32L24.500 24Z" fill="#9a9a9a" stroke="#fff" /><path d="M12.500 26V56" /></svg>
          <div class="title-box">
            <span class="handle hl ht"></span>
            <span class="handle hc ht"></span>
            <span class="handle hr ht"></span>
            <span class="handle hl hm"></span>
            <span class="handle hr hm"></span>
            <span class="cursor"></span>
            <span class="handle hl hb"></span>
            <span class="handle hc hb"></span>
            <span class="handle hr hb"></span>
          </div>
          <div class="sub-box">单击此处添加副标题</div>
        </div>
      </div>
      <div class="notes">单击此处添加备注</div>
    </div>
  </main>

  <footer class="status">
    <span class="st-count">幻灯片 第 1 张，共 1 张</span>
    <svg class="st-check" width="17" height="15" viewBox="0 0 17 15" fill="none" stroke="#777"><path d="M8.500 2C6 .5 3 .5.500 1V13C3 12.500 6 12.500 8.500 14C11 12.500 14 12.500 16.500 13V1C14 .5 11 .5 8.500 2ZM8.500 2V14" /><path d="M10.500 7L12 9L15 4" /></svg>
    <span class="st-lang">中文(中国)</span>
    <div class="st-right">
      <div class="st-item">
        <svg width="14" height="14" viewBox="0 0 14 14"><path d="M7 1L11 5H3Z" fill="#555" /><path d="M0 7.500H14M1 10.500H13M2 13.500H10" stroke="#555" /></svg>
        <span>备注</span>
      </div>
      <div class="st-item st-comment">
        <svg width="18" height="16" viewBox="0 0 18 16"><path d="M2 0H16C17 0 18 1 18 2V9C18 10 17 11 16 11H7L4 15V11H2C1 11 0 10 0 9V2C0 1 1 0 2 0Z" fill="#5e5e5e" /></svg>
        <span>批注</span>
      </div>
      <div class="views">
        <div class="view on"><svg width="18" height="17" viewBox="0 0 18 17" fill="none" stroke="#666"><path d="M.5.500H17.500V16.500H.5ZM5 .5V16.500M5 11.500H17.500" /><rect x="8" y="3.500" width="7" height="5" /></svg></div>
        <div class="view"><svg width="16" height="15" viewBox="0 0 16 15" fill="none" stroke="#666"><rect x=".5" y=".5" width="6" height="5.500" /><rect x="9.500" y=".5" width="6" height="5.500" /><rect x=".5" y="9" width="6" height="5.500" /><rect x="9.500" y="9" width="6" height="5.500" /></svg></div>
        <div class="view"><svg width="17" height="16" viewBox="0 0 17 16" fill="none" stroke="#666"><path d="M8.500 2C6 1 3 1 .5 1.500V14C3 13.500 6 13.500 8.500 14.500C11 13.500 14 13.500 16.500 14V1.500C14 1 11 1 8.500 2ZM8.500 2V15M2.500 5H6.500M2.500 8H6.500M2.500 11H6.500M10.500 5H14.500M10.500 8H14.500M10.500 11H14.500" /></svg></div>
        <div class="view"><svg width="17" height="16" viewBox="0 0 17 16" fill="none" stroke="#666"><path d="M0 .5H17" stroke-width="1.500" /><path d="M2.500 1V9.500H14.500V1M8.500 9.500V14M4.500 15H12.500" /></svg></div>
      </div>
      <div class="zoom">
        <svg width="9" height="2" viewBox="0 0 9 2"><rect width="9" height="1.400" fill="#555" /></svg>
        <div class="slider"><b></b><i></i></div>
        <svg width="9" height="9" viewBox="0 0 9 9" stroke="#555"><path d="M0 4.500H9M4.500 0V9" /></svg>
        <span class="pct">81%</span>
        <svg class="fit" width="12" height="13" viewBox="0 0 12 13" fill="none" stroke="#666"><rect x=".5" y=".5" width="11" height="12" /><path d="M3 3.500H5M3 3.500V5.500M9 3.500H7M9 3.500V5.500M3 9.500H5M3 9.500V7.500M9 9.500H7M9 9.500V7.500" /></svg>
      </div>
    </div>
  </footer>

  <div class="taskbar">
    <div class="t1"></div>
    <div class="t2"></div>
    <div class="t3"></div>
    <div class="t4"></div>
    <div class="t5"></div>
    <div class="t6"></div>
    <div class="t7"></div>
    <div class="t8"></div>
  </div>

  <svg class="arrow" width="1920" height="1039" viewBox="0 0 1920 1039">
    <path d="M900 103L909 118L905.500 116L908 310L898.500 116L892 119Z" fill="#ff3b40" />
  </svg>

  <div class="wm">
    <svg class="wm-paw" width="110" height="120" viewBox="0 0 110 120" fill="#fff" stroke="#c4c4c4" stroke-width="1.500">
      <ellipse cx="14" cy="45" rx="13" ry="17" />
      <ellipse cx="39" cy="23" rx="12" ry="18" />
      <ellipse cx="70" cy="24" rx="13" ry="18" />
      <ellipse cx="90" cy="55" rx="12" ry="20" />
      <path d="M52 49C68 49 74 62 84 74C96 90 96 112 74 112C64 112 60 108 52 108C42 108 36 112 28 112C6 112 6 90 20 74C30 62 36 49 52 49Z" />
    </svg>
    <span class="wm-bai">Bai</span>
    <span class="wm-du">du</span>
    <span class="wm-jy">经验</span>
    <span class="wm-url">jingyan.baidu.com</span>
  </div>
</div>
